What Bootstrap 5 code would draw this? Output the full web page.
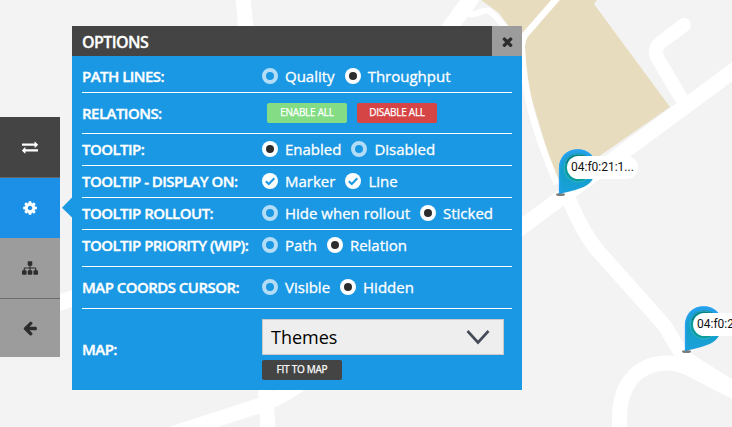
<!DOCTYPE html>
<html lang="en">
<head>
<meta charset="utf-8">
<title>Map options</title>
<link href="https://cdn.jsdelivr.net/npm/bootstrap@5.3.0/dist/css/bootstrap.min.css" rel="stylesheet">
<style>
body{width:732px;height:427px;background:#f3f3f3;font-family:"Open Sans",sans-serif;color:#fff}
.map-bg{left:0;top:0}
.side-nav{width:60px;margin-top:117px}
.side-nav .tool{height:60px;background:#9c9c9c;color:#2d2d2d}
.side-nav .tool-dark{background:#444;color:#fff;height:61px;border-bottom:1px solid #666}
.side-nav .tool-active{background:#1c90e6;color:#fff;padding-bottom:1px}
.side-nav .tool-line{height:61px;border-bottom:1px solid #6b6b6b;padding-bottom:1px}
.side-nav .tool-last{height:58px}
.side-nav svg,.btn-x svg{fill:currentColor}
.arrow-col{width:12px;padding-top:197px;padding-left:2px}
.panel{width:450px;height:364px;margin-top:26px;background:#1b98e3}
.panel-head{height:30px;background:#444}
.panel-head h1{font-size:16px;font-weight:600;letter-spacing:-.6px;line-height:20px;padding:2px 0 0 10px;margin:0;-webkit-text-stroke:.3px #fff}
.btn-x{width:30px;height:30px;background:#9c9c9c;color:#2d2d2d;border:0;padding:0 0 2px}
.opt-row{margin:0 10px;border-bottom:1px solid #fff;height:32px;padding-bottom:2px}
.opt-row.first{height:37px;padding-top:4px;padding-bottom:0}
.opt-row.buttons{height:41px;padding-bottom:0}
.opt-row.prio{height:37px;padding-bottom:7px}
.opt-row.coords{height:42px}
.opt-row.last{height:81px;border:0;padding-bottom:0}
.opt-row.last .opt-label{padding-bottom:2px}
.opt-label{width:180px;font-size:15px;font-weight:600;letter-spacing:-.53px;line-height:20px;white-space:nowrap;-webkit-text-stroke:.35px #fff}
.choice{font-size:15px;line-height:20px;margin-right:10px;white-space:nowrap;-webkit-text-stroke:.3px #fff}
.choice svg{margin-right:7px}
.btn-pair{gap:10px;padding-left:5px}
.map-tools{gap:5px}
.btn-s{width:80px;height:20px;border:0;border-radius:2px;padding:0;font-size:10px;line-height:18px;letter-spacing:-.25px;color:#fff;text-align:center;-webkit-text-stroke:.25px #fff}
.btn-s span{display:block;height:20px}
.go{background:#84dd84}.stop{background:#d64545}.fit{background:#444}
.theme-select{width:242px;height:36px;background:#eee;border:1px solid #c8c8c8;color:#000;font-size:18px;padding:0 13px 0 8px}
.tag{font-family:Roboto,sans-serif;font-size:12px;line-height:23px;height:23px;width:71px;border-radius:12px;background:#fff;color:#111;padding-left:4px;white-space:nowrap}
.tag-a{left:567px;top:156px}.tag-b{left:693px;top:313px}
</style>
</head>
<body class="position-relative overflow-hidden">
<svg class="map-bg position-absolute" width="732" height="427" viewBox="0 0 732 427">
  <defs>
    <linearGradient id="pinfill" x1="0" y1="0" x2="0" y2="1"><stop offset="0" stop-color="#25a0ea"/><stop offset=".5" stop-color="#12a0c8"/><stop offset="1" stop-color="#1ba0dc"/></linearGradient>
    <g id="pin">
      <ellipse cx="1.500" cy="-.5" rx="4.500" ry="1.500" fill="#444" opacity=".7"/>
      <path d="M0-1V-26C0-38 8-45.500 19-45.500C29-45.500 37-38 37-28C37-17 31-10 22-7C14-4 7-3 0-1Z" fill="url(#pinfill)"/>
      <path d="M.6-2V-26C.6-38 8-45 19-45C28-45 35-39 36.500-30" fill="none" stroke="#27a2f0" stroke-width="1.500"/>
      <circle cx="19" cy="-27" r="14" fill="#0c9c9f"/>
      <path d="M7-32A13 13 0 0 1 31-33" fill="none" stroke="#08777f" stroke-width="2"/>
      <circle cx="19" cy="-27" r="14" fill="none" stroke="#3bb9cb" stroke-width=".8"/>
    </g>
  </defs>
  <path d="M481 0H597L594 4L670 107L562 182L556 180L520 60L516 36L499 13Z" fill="#e7ddbe"/>
  <g fill="none" stroke="#fff">
    <path d="M243 -2L247 40" stroke-width="15"/>
    <path d="M473 -4L448 30" stroke-width="16"/>
    <path d="M464 12C477 19 480 8 489 11C496 15 505 27 520 45" stroke-width="6"/>
    <path d="M559 -4L525 35Q521 42 522 50C524 87 530 120 557 184" stroke-width="6.500"/>
    <path d="M500 243L740 66" stroke-width="15.500"/>
    <path d="M684 25L660 43Q653 49 658 59L686 106" stroke-width="14" stroke-linecap="round"/>
    <path d="M567 195Q583 234 599 252L665 326L683 357L740 393" stroke-width="14.500"/>
    <path d="M620 430C616 387 635 363 669 363C689 364 701 377 740 394" stroke-width="15"/>
    <path d="M55 304L74 298" stroke-width="16"/>
    <path d="M150 441L255 407Q278 400 300 384" stroke-width="15"/>
    <path d="M265 380L268 430" stroke-width="15"/>
  </g>
  <use href="#pin" x="559" y="195"/>
  <use href="#pin" x="685" y="352"/>
</svg>
<div class="tag tag-a position-absolute">04:f0:21:1...</div>
<div class="tag tag-b position-absolute">04:f0:21:1...</div>

<main class="d-flex align-items-start position-relative">
  <nav class="side-nav d-flex flex-column">
    <div class="tool tool-dark d-flex align-items-center justify-content-center"><svg width="16" height="16" viewBox="0 0 1792 1792"><path d="M1792 1184v192q0 13-9.500 22.500t-22.500 9.500h-1376v192q0 13-9.500 22.500t-22.500 9.500q-12 0-24-10l-319-320q-9-9-9-22 0-14 9-23l320-320q9-9 23-9 13 0 22.500 9.500t9.500 22.500v192h1376q13 0 22.500 9.500t9.500 22.500zm0-544q0 14-9 23l-320 320q-9 9-23 9-13 0-22.500-9.500t-9.500-22.500v-192h-1376q-13 0-22.500-9.500t-9.500-22.500v-192q0-13 9.500-22.500t22.500-9.500h1376v-192q0-14 9-23t23-9q12 0 24 10l319 319q9 9 9 23z"/></svg></div>
    <div class="tool tool-active d-flex align-items-center justify-content-center"><svg width="16" height="16" viewBox="0 0 1792 1792"><path d="M1152 896q0-106-75-181t-181-75-181 75-75 181 75 181 181 75 181-75 75-181zm512-109v222q0 12-8 23t-20 13l-185 28q-19 54-39 91 35 50 107 138 10 12 10 25t-9 23q-27 37-99 108t-94 71q-12 0-26-9l-138-108q-44 23-91 38-16 136-29 186-7 28-36 28h-222q-14 0-24.500-8.500t-11.500-21.500l-28-184q-49-16-90-37l-141 107q-10 9-25 9-14 0-25-11-126-114-165-168-7-10-7-23 0-12 8-23 15-21 51-66.500t54-70.500q-27-50-41-99l-183-27q-13-2-21-12.500t-8-23.500v-222q0-12 8-23t19-13l186-28q14-46 39-92-40-57-107-138-10-12-10-24 0-10 9-23 26-36 98.500-107.500t94.500-71.500q13 0 26 10l138 107q44-23 91-38 16-136 29-186 7-28 36-28h222q14 0 24.500 8.500t11.500 21.500l28 184q49 16 90 37l142-107q9-9 24-9 13 0 25 10 129 119 165 170 7 8 7 22 0 12-8 23-15 21-51 66.500t-54 70.500q26 50 41 98l183 28q13 2 21 12.500t8 23.500z"/></svg></div>
    <div class="tool tool-line d-flex align-items-center justify-content-center"><svg width="16" height="16" viewBox="0 0 1792 1792"><path d="M1792 1248v320q0 40-28 68t-68 28h-320q-40 0-68-28t-28-68v-320q0-40 28-68t68-28h96v-192h-512v192h96q40 0 68 28t28 68v320q0 40-28 68t-68 28h-320q-40 0-68-28t-28-68v-320q0-40 28-68t68-28h96v-192h-512v192h96q40 0 68 28t28 68v320q0 40-28 68t-68 28h-320q-40 0-68-28t-28-68v-320q0-40 28-68t68-28h96v-192q0-52 38-90t90-38h512v-192h-96q-40 0-68-28t-28-68v-320q0-40 28-68t68-28h320q40 0 68 28t28 68v320q0 40-28 68t-68 28h-96v192h512q52 0 90 38t38 90v192h96q40 0 68 28t28 68z"/></svg></div>
    <div class="tool tool-last d-flex align-items-center justify-content-center"><svg width="16" height="16" viewBox="0 0 1792 1792"><path d="M1664 896v128q0 53-32.500 90.500t-84.500 37.500h-704l293 294q38 36 38 90t-38 90l-75 76q-37 37-90 37-52 0-91-37l-651-652q-37-37-37-90 0-52 37-91l651-650q38-38 91-38 52 0 90 38l75 74q38 38 38 91t-38 91l-293 293h704q52 0 84.500 37.500t32.500 90.500z"/></svg></div>
  </nav>
  <div class="arrow-col"><svg class="d-block" width="10" height="21" viewBox="0 0 10 21"><path d="M10 .5V20.500L0 10.800Z" fill="#1b98e3"/></svg></div>
  <section class="panel">
    <header class="panel-head d-flex align-items-center justify-content-between"><h1>OPTIONS</h1>
      <button class="btn-x d-flex align-items-center justify-content-center" type="button" aria-label="Close"><svg width="15" height="15" viewBox="0 -132 1792 1792"><path d="M1490 1322q0 40-28 68l-136 136q-28 28-68 28t-68-28l-294-294-294 294q-28 28-68 28t-68-28l-136-136q-28-28-28-68t28-68l294-294-294-294q-28-28-28-68t28-68l136-136q28-28 68-28t68 28l294 294 294-294q28-28 68-28t68 28l136 136q28 28 28 68t-28 68l-294 294 294 294q28 28 28 68z"/></svg></button>
    </header>
    <svg class="d-none">
      <symbol id="off" viewBox="0 0 16 16"><circle cx="8" cy="8" r="6" fill="none" stroke="#b3dcf6" stroke-width="4"/></symbol>
      <symbol id="on" viewBox="0 0 16 16"><circle cx="8" cy="8" r="8" fill="#fff"/><circle cx="8" cy="8" r="4" fill="#2d2d2d"/></symbol>
      <symbol id="check" viewBox="0 0 16 16"><circle cx="8" cy="8" r="8" fill="#fff"/><path d="M3.800 8.200L6.800 11L12.300 5.300" fill="none" stroke="#1b98e3" stroke-width="2"/></symbol>
    </svg>
    <div class="opt-row first d-flex align-items-center"><div class="opt-label">PATH LINES:</div>
      <label class="choice d-flex align-items-center"><svg width="16" height="16"><use href="#off"/></svg>Quality</label><label class="choice d-flex align-items-center"><svg width="16" height="16"><use href="#on"/></svg>Throughput</label></div>
    <div class="opt-row buttons d-flex align-items-center"><div class="opt-label">RELATIONS:</div>
      <div class="d-flex btn-pair"><button class="btn-s go" type="button"><span>ENABLE ALL</span></button><button class="btn-s stop" type="button"><span>DISABLE ALL</span></button></div></div>
    <div class="opt-row d-flex align-items-center"><div class="opt-label">TOOLTIP:</div>
      <label class="choice d-flex align-items-center"><svg width="16" height="16"><use href="#on"/></svg>Enabled</label><label class="choice d-flex align-items-center"><svg width="16" height="16"><use href="#off"/></svg>Disabled</label></div>
    <div class="opt-row d-flex align-items-center"><div class="opt-label">TOOLTIP - DISPLAY ON:</div>
      <label class="choice d-flex align-items-center"><svg width="16" height="16"><use href="#check"/></svg>Marker</label><label class="choice d-flex align-items-center"><svg width="16" height="16"><use href="#check"/></svg>Line</label></div>
    <div class="opt-row d-flex align-items-center"><div class="opt-label">TOOLTIP ROLLOUT:</div>
      <label class="choice d-flex align-items-center"><svg width="16" height="16"><use href="#off"/></svg>Hide when rollout</label><label class="choice d-flex align-items-center"><svg width="16" height="16"><use href="#on"/></svg>Sticked</label></div>
    <div class="opt-row prio d-flex align-items-center"><div class="opt-label">TOOLTIP PRIORITY (WIP):</div>
      <label class="choice d-flex align-items-center"><svg width="16" height="16"><use href="#off"/></svg>Path</label><label class="choice d-flex align-items-center"><svg width="16" height="16"><use href="#on"/></svg>Relation</label></div>
    <div class="opt-row coords d-flex align-items-center"><div class="opt-label">MAP COORDS CURSOR:</div>
      <label class="choice d-flex align-items-center"><svg width="16" height="16"><use href="#off"/></svg>Visible</label><label class="choice d-flex align-items-center"><svg width="16" height="16"><use href="#on"/></svg>Hidden</label></div>
    <div class="opt-row last d-flex align-items-center"><div class="opt-label">MAP:</div>
      <div class="d-flex flex-column map-tools"><div class="theme-select d-flex align-items-center justify-content-between">Themes<svg width="24" height="15" viewBox="0 0 24 15"><path d="M1.500 1L12 12.500L22.500 1" fill="none" stroke="#444b58" stroke-width="2.600"/></svg></div>
      <button class="btn-s fit" type="button"><span>FIT TO MAP</span></button></div></div>
  </section>
</main>
<script src="https://cdn.jsdelivr.net/npm/bootstrap@5.3.0/dist/js/bootstrap.bundle.min.js"></script>
</body>
</html>
